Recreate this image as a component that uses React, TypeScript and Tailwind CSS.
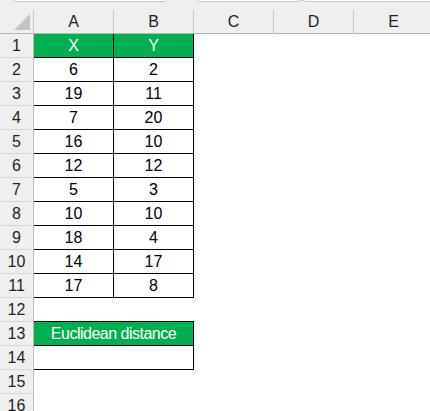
import React from "react";

const data: [number, number][] = [
  [6, 2],
  [19, 11],
  [7, 20],
  [16, 10],
  [12, 12],
  [5, 3],
  [10, 10],
  [18, 4],
  [14, 17],
  [17, 8],
];

const font = { fontFamily: '"Liberation Sans", Arial, sans-serif' };

function RowHead({ n }: { n: number }) {
  return (
    <div className="w-[34px] h-[24px] shrink-0 bg-[#efefef] border-r border-r-[#bcbcbc] border-b border-b-[#d6d6d6] flex items-center justify-center text-[16px] text-[#1f1f1f]">
      {n}
    </div>
  );
}

export default function App() {
  const cols = ["A", "B", "C", "D", "E"];
  return (
    <div className="w-[430px] h-[411px] overflow-hidden bg-white" style={font}>
      {/* top strip */}
      <div className="h-[10px] bg-[#efefef] flex items-start">
        <div className="ml-[13px] w-[153px] h-[2px] bg-white border-b border-x border-[#c8c8c8] rounded-b-[3px]" />
        <div className="ml-[31px] w-[101px] h-[2px] bg-white border-b border-l border-[#c8c8c8] rounded-bl-[3px]" />
        <div className="w-[8px] h-[2px] flex items-start justify-center">
          <svg width="8" height="3" viewBox="0 0 8 3">
            <path d="M0 1.5 L4 0 L8 1.5" fill="none" stroke="#c8c8c8" strokeWidth="1" />
          </svg>
        </div>
        <div className="flex-1 h-[2px] bg-white border-b border-[#c8c8c8]" />
      </div>
      {/* column header */}
      <div className="flex h-[24px] bg-[#efefef] border-b border-b-[#b5b5b5]">
        <div className="w-[34px] h-[23px] shrink-0 border-r border-r-[#c8c8c8] flex items-end justify-end pr-[3px] pb-[3px]">
          <svg width="16" height="16" viewBox="0 0 16 16">
            <path d="M16 0 L16 16 L0 16 Z" fill="#c4c4c4" />
          </svg>
        </div>
        {cols.map((c) => (
          <div
            key={c}
            className="w-[80px] h-[23px] shrink-0 border-r border-r-[#c8c8c8] flex items-center justify-center text-[16px] text-[#1f1f1f]"
          >
            {c}
          </div>
        ))}
      </div>
      {/* row 1 */}
      <div className="flex">
        <RowHead n={1} />
        <div className="w-[80px] h-[24px] bg-[#00b050] border-r border-b border-black flex items-center justify-center text-[16px] text-white">
          X
        </div>
        <div className="w-[80px] h-[24px] bg-[#00b050] border-r border-b border-black flex items-center justify-center text-[16px] text-white">
          Y
        </div>
      </div>
      {data.map(([x, y], i) => (
        <div key={i} className="flex">
          <RowHead n={i + 2} />
          <div className="w-[80px] h-[24px] border-r border-b border-black flex items-center justify-center text-[16px] text-black">
            {x}
          </div>
          <div className="w-[80px] h-[24px] border-r border-b border-black flex items-center justify-center text-[16px] text-black">
            {y}
          </div>
        </div>
      ))}
      <div className="flex">
        <RowHead n={12} />
      </div>
      <div className="flex">
        <RowHead n={13} />
        <div className="w-[160px] -mt-px h-[25px] bg-[#00b050] border-r border-b border-t border-black flex items-center justify-center text-[16px] tracking-[-0.5px] text-white">
          Euclidean distance
        </div>
      </div>
      <div className="flex">
        <RowHead n={14} />
        <div className="w-[160px] h-[24px] border-r border-b border-black" />
      </div>
      <div className="flex">
        <RowHead n={15} />
      </div>
      <div className="flex">
        <RowHead n={16} />
      </div>
    </div>
  );
}
